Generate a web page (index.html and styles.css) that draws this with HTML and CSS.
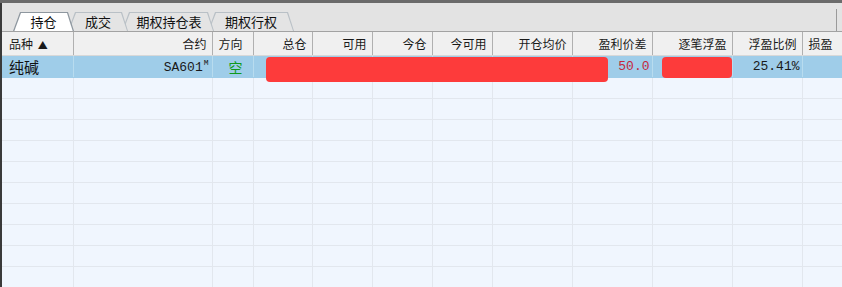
FILE: index.html
```html
<!DOCTYPE html>
<html lang="zh">
<head>
    <meta charset="UTF-8">
    <title>持仓</title>
    <link rel="stylesheet" href="styles.css">
</head>
<body>
    <div class="topbar"></div>
    <div class="frame">
        <div class="tabstrip">
            <div class="tab tab-1 active"><span>持仓</span></div>
            <div class="tab tab-2"><span>成交</span></div>
            <div class="tab tab-3"><span>期权持仓表</span></div>
            <div class="tab tab-4"><span>期权行权</span></div>
        </div>
        <div class="grid-wrap">
            <table class="grid">
                <colgroup>
                    <col style="width:71px"><col style="width:139px"><col style="width:41px">
                    <col style="width:59px"><col style="width:60px"><col style="width:60px">
                    <col style="width:60px"><col style="width:80px"><col style="width:80px">
                    <col style="width:80px"><col style="width:70px"><col style="width:40px">
                </colgroup>
                <thead>
                    <tr>
                        <th class="left first">品种 <span class="sort">▲</span></th>
                        <th>合约</th>
                        <th class="left">方向</th>
                        <th>总仓</th>
                        <th>可用</th>
                        <th>今仓</th>
                        <th>今可用</th>
                        <th>开仓均价</th>
                        <th>盈利价差</th>
                        <th>逐笔浮盈</th>
                        <th>浮盈比例</th>
                        <th class="left">损盈</th>
                    </tr>
                </thead>
                <tbody>
                    <tr class="selected">
                        <td class="name">纯碱</td>
                        <td class="num code">SA601<sup>M</sup></td>
                        <td class="dir">空</td>
                        <td></td><td></td><td></td><td></td><td></td>
                        <td class="num loss">50.0</td>
                        <td></td>
                        <td class="num">25.41%</td>
                        <td></td>
                    </tr>
                    <tr><td></td><td></td><td></td><td></td><td></td><td></td><td></td><td></td><td></td><td></td><td></td><td></td></tr>
                    <tr><td></td><td></td><td></td><td></td><td></td><td></td><td></td><td></td><td></td><td></td><td></td><td></td></tr>
                    <tr><td></td><td></td><td></td><td></td><td></td><td></td><td></td><td></td><td></td><td></td><td></td><td></td></tr>
                    <tr><td></td><td></td><td></td><td></td><td></td><td></td><td></td><td></td><td></td><td></td><td></td><td></td></tr>
                    <tr><td></td><td></td><td></td><td></td><td></td><td></td><td></td><td></td><td></td><td></td><td></td><td></td></tr>
                    <tr><td></td><td></td><td></td><td></td><td></td><td></td><td></td><td></td><td></td><td></td><td></td><td></td></tr>
                    <tr><td></td><td></td><td></td><td></td><td></td><td></td><td></td><td></td><td></td><td></td><td></td><td></td></tr>
                    <tr><td></td><td></td><td></td><td></td><td></td><td></td><td></td><td></td><td></td><td></td><td></td><td></td></tr>
                    <tr><td></td><td></td><td></td><td></td><td></td><td></td><td></td><td></td><td></td><td></td><td></td><td></td></tr>
                    <tr><td></td><td></td><td></td><td></td><td></td><td></td><td></td><td></td><td></td><td></td><td></td><td></td></tr>
                </tbody>
            </table>
            <div class="redact redact-1"></div>
            <div class="redact redact-2"></div>
        </div>
    </div>
</body>
</html>
```

FILE: styles.css
```css
body {
    margin: 0;
    width: 842px;
    height: 287px;
    overflow: hidden;
    font-family: "Noto Sans CJK SC", "DejaVu Sans", sans-serif;
    background: #f0f6fe;
}

.topbar {
    height: 3px;
    background: #6b6b6b;
}

.frame {
    border-left: 2px solid #3a3a3a;
    height: 284px;
    background: #f0f6fe;
}

/* tabs */
.tabstrip {
    position: relative;
    display: flex;
    align-items: flex-end;
    height: 29px;
    padding-left: 11px;
    background: #e3e3e3;
    border-bottom: 1px solid #a2a2a2;
    box-sizing: border-box;
}

.tabstrip::after {
    content: '';
    position: absolute;
    right: 5px;
    top: 6px;
    bottom: 0;
    width: 1px;
    background: #9a9a9a;
}

.tab {
    position: relative;
    height: 19px;
    display: flex;
    align-items: center;
    justify-content: center;
    font-size: 13px;
    color: #111;
    background: #b9c0c6;
    clip-path: polygon(0 100%, 7px 0, calc(100% - 6px) 0, 100% 100%);
    margin-right: -6px;
}

.tab::before {
    content: '';
    position: absolute;
    inset: 1px 1px 0 1px;
    background: #e4e4e4;
    clip-path: polygon(0 100%, 7px 0, calc(100% - 6px) 0, 100% 100%);
}

.tab span {
    position: relative;
    line-height: 1;
}

.tab.active {
    background: #8e979f;
}

.tab.active::before {
    background: #ffffff;
    bottom: -1px;
}

.tab-1 { width: 61px; z-index: 4; }
.tab-2 { width: 60px; z-index: 3; }
.tab-3 { width: 92px; z-index: 2; }
.tab-4 { width: 86px; z-index: 1; }

.tab-3 span { margin-left: 2px; }

/* grid */
.grid-wrap {
    position: relative;
}

.grid {
    border-collapse: collapse;
    table-layout: fixed;
    width: 840px;
}

.grid th {
    height: 23px;
    padding: 0 5px 0 0;
    font-size: 12px;
    font-weight: normal;
    color: #1a1a1a;
    text-align: right;
    background: #f0f0f0;
    border-right: 1px solid #b0b0b0;
    border-bottom: 1px solid #d8d8d8;
    white-space: nowrap;
    overflow: hidden;
}

.grid th.left {
    text-align: left;
    padding-left: 6px;
}

.grid th.first {
    padding-left: 7px;
}

.sort {
    font-size: 10px;
    margin-left: 2px;
}

.grid td {
    height: 20px;
    padding: 0 2px 0 0;
    border-right: 1px solid #e2e7ee;
    border-bottom: 1px solid #e2e7ee;
    font-size: 13px;
    white-space: nowrap;
    overflow: hidden;
}

.grid tr.selected td {
    background: #9fcde9;
    border-right-color: #b8dcef;
    border-bottom-color: #9fcde9;
}

.grid td.name {
    font-size: 15px;
    padding-left: 7px;
    color: #111;
}

.grid td.num {
    text-align: right;
    font-family: "Liberation Mono", "DejaVu Sans Mono", monospace;
    color: #1a1a1a;
}

.grid td.code {
    padding-right: 3px;
}

.grid td.code sup {
    font-size: 8px;
    vertical-align: 6px;
    margin-left: 1px;
}

.grid td.dir {
    color: #109a1c;
    font-size: 14px;
    padding-left: 16px;
}

.grid td.loss {
    color: #c4283c;
}

/* masked values */
.redact {
    position: absolute;
    background: #fd3b3b;
    border-radius: 4px;
}

.redact-1 {
    left: 264px;
    top: 25px;
    width: 342px;
    height: 25px;
}

.redact-2 {
    left: 660px;
    top: 25px;
    width: 70px;
    height: 21px;
}
```
